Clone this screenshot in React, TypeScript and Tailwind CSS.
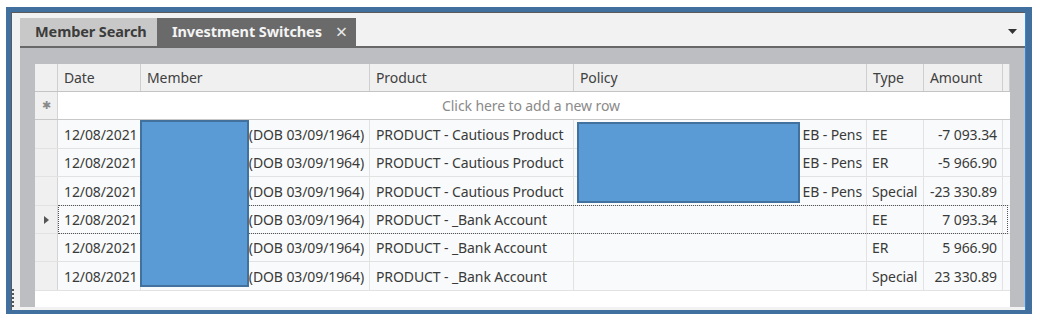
import React from "react";

const cols = [23, 83, 229, 204, 293, 57, 79, 7];
const rowH = [29, 28, 29, 28, 28, 29];

const rows = [
  { product: "PRODUCT - Cautious Product", policy: "EB - Pens", type: "EE", amount: "-7 093.34" },
  { product: "PRODUCT - Cautious Product", policy: "EB - Pens", type: "ER", amount: "-5 966.90" },
  { product: "PRODUCT - Cautious Product", policy: "EB - Pens", type: "Special", amount: "-23 330.89" },
  { product: "PRODUCT - _Bank Account", policy: "", type: "EE", amount: "7 093.34" },
  { product: "PRODUCT - _Bank Account", policy: "", type: "ER", amount: "5 966.90" },
  { product: "PRODUCT - _Bank Account", policy: "", type: "Special", amount: "23 330.89" },
];

const font = { fontFamily: '"Noto Sans", "Open Sans", sans-serif' };

export default function App() {
  return (
    <div className="w-[1040px] h-[321px] bg-white pt-[7px] pl-[6px]" style={font}>
      <div className="w-[1026px] h-[307px] border-l-[5px] border-t-[5px] border-b-[4px] border-r-[6px] border-[#41709e] flex flex-col">
        <div className="flex-1 flex flex-col border-l border-t border-[#5a5a5a] border-r-[1px] border-r-[#2f86dc] bg-[#f2f2f2] relative">
          {/* grip */}
          <div className="absolute left-[0px] top-[276px] h-[18px] w-[2px] border-l-2 border-dotted border-[#555]" />
          {/* tab strip */}
          <div className="flex h-[33px] pt-[5px] pl-[8px] items-stretch">
            <div className="w-[137px] bg-[#c8c8c8] flex items-center pl-[15px] text-[14.5px] font-bold text-[#3c3c3c] tracking-[-0.1px]">
              Member Search
            </div>
            <div className="w-[199px] bg-[#6a6a6a] flex items-center pl-[15px] text-[14.5px] font-bold text-[#f4f4f4] tracking-[-0.1px]">
              <span>Investment Switches</span>
              <span className="ml-[14px] text-[20px] font-normal leading-none text-[#e8e8e8]">×</span>
            </div>
            <div className="flex-1 flex items-center justify-end pr-[8px]">
              <svg width="9" height="6" viewBox="0 0 9 6">
                <path d="M0 0 L9 0 L4.5 5 Z" fill="#333" />
              </svg>
            </div>
          </div>
          <div className="ml-[8px] h-[2px] bg-[#686868]" />
          {/* gray panel */}
          <div className="ml-[8px] h-[259px] bg-[#bdbec2] flex pl-[15px] pt-[16px] pr-[15px]">
            <div className="flex-1 bg-white relative overflow-hidden text-[14px] text-[#3a3a3a] tracking-[-0.1px]">
              {/* header */}
              <div className="flex h-[28px] bg-[#f0f0f0] border-b border-[#c4c4c4]">
                {["", "Date", "Member", "Product", "Policy", "Type", "Amount", ""].map((h, i) => (
                  <div
                    key={i}
                    className="h-full flex items-center pl-[6px] pb-[1px] border-r border-[#cfcfcf] text-[#404040]"
                    style={{ width: cols[i] }}
                  >
                    {h}
                  </div>
                ))}
              </div>
              {/* new row */}
              <div className="flex h-[28px] border-b border-[#c8c8c8]">
                <div className="h-full bg-[#f0f0f0] border-r border-[#d4d4d4] flex items-center justify-center text-[#8a8a8a] text-[11px]" style={{ width: cols[0] }}>
                  ✱
                </div>
                <div className="flex-1 flex items-center justify-center text-[#8a8a8a] pr-[6px]">
                  Click here to add a new row
                </div>
              </div>
              {rows.map((r, ri) => (
                <div key={ri} className="flex border-b border-[#e2e2e2] relative" style={{ height: rowH[ri] }}>
                  <div className="h-full bg-[#f0f0f0] border-r border-[#d4d4d4] flex items-center justify-center" style={{ width: cols[0] }}>
                    {ri === 3 && (
                      <svg width="5" height="8" viewBox="0 0 5 8">
                        <path d="M0 0 L5 4 L0 8 Z" fill="#555" />
                      </svg>
                    )}
                  </div>
                  <div className="h-full bg-[#f9fafb] border-r border-[#e2e2e2] flex items-center pl-[6px]" style={{ width: cols[1] }}>
                    12/08/2021
                  </div>
                  <div className="h-full bg-[#f9fafb] border-r border-[#e2e2e2] flex items-center justify-end pr-[5px]" style={{ width: cols[2] }}>
                    (DOB 03/09/1964)
                  </div>
                  <div className="h-full bg-[#f9fafb] border-r border-[#e2e2e2] flex items-center pl-[6px] whitespace-nowrap" style={{ width: cols[3] }}>
                    {r.product}
                  </div>
                  <div className="h-full bg-[#f9fafb] border-r border-[#e2e2e2] flex items-center justify-end pr-[4px]" style={{ width: cols[4] }}>
                    {r.policy}
                  </div>
                  <div className="h-full bg-[#f9fafb] border-r border-[#e2e2e2] flex items-center pl-[5px]" style={{ width: cols[5] }}>
                    {r.type}
                  </div>
                  <div className="h-full bg-[#f9fafb] border-r border-[#e2e2e2] flex items-center justify-end pr-[5px]" style={{ width: cols[6] }}>
                    {r.amount}
                  </div>
                  <div className="h-full bg-[#f9fafb]" style={{ width: cols[7] }} />
                  {ri === 3 && (
                    <div className="absolute left-[23px] right-[2px] top-[-1px] bottom-[-1px] border border-dotted border-[#555]" />
                  )}
                </div>
              ))}
              {/* redaction boxes */}
              <div className="absolute left-[105px] top-[56px] w-[109px] h-[167px] bg-[#5b9bd5] border-2 border-[#41719c]" />
              <div className="absolute left-[542px] top-[58px] w-[223px] h-[81px] bg-[#5b9bd5] border-2 border-[#41719c]" />
            </div>
          </div>
          <div className="flex-1" />
        </div>
      </div>
    </div>
  );
}
